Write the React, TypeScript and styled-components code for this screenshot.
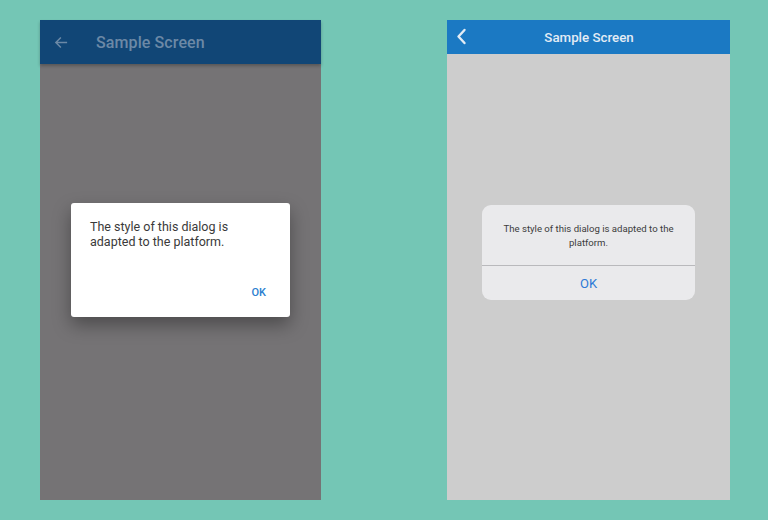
import styled, { createGlobalStyle } from 'styled-components';

const GlobalStyle = createGlobalStyle`
  html, body {
    margin: 0;
    padding: 0;
    background: #74c6b5;
    font-family: Roboto, "Liberation Sans", sans-serif;
  }
`;

const Stage = styled.div`
  width: 768px;
  height: 520px;
  display: flex;
  align-items: flex-start;
  padding-top: 20px;
  box-sizing: border-box;
`;

const Phone = styled.div<{ $left: number; $width: number; $bg: string }>`
  margin-left: ${(p) => p.$left}px;
  width: ${(p) => p.$width}px;
  height: 480px;
  background: ${(p) => p.$bg};
  display: flex;
  flex-direction: column;
`;

const AndroidBar = styled.div`
  height: 44px;
  background: #114676;
  display: flex;
  align-items: center;
  padding-left: 14px;
  gap: 27px;
  color: #6c89a6;
  box-shadow: 0 2px 3px rgba(0, 0, 0, 0.25);
`;

const AndroidTitle = styled.span`
  font-size: 16px;
  font-weight: 500;
  letter-spacing: 0.1px;
`;

const IosBar = styled.div`
  height: 34px;
  background: #1b79c3;
  display: flex;
  align-items: center;
  position: relative;
  color: #e3ecf5;
`;

const IosBack = styled.span`
  position: absolute;
  left: 9px;
  top: 8px;
  display: flex;
`;

const IosTitle = styled.span`
  flex: 1;
  text-align: center;
  font-size: 13.3px;
  font-weight: 500;
  padding-left: 1px;
`;

const Body = styled.div<{ $top: number; $pad: number }>`
  flex: 1;
  padding-top: ${(p) => p.$top}px;
  padding-left: ${(p) => p.$pad}px;
`;

const MaterialDialog = styled.div`
  width: 219px;
  height: 114px;
  background: #fff;
  border-radius: 3px;
  box-shadow: 0 8px 18px rgba(0, 0, 0, 0.35);
  box-sizing: border-box;
  padding: 16px 20px 0 19px;
  display: flex;
  flex-direction: column;
`;

const MaterialText = styled.p`
  margin: 0;
  font-size: 12.5px;
  line-height: 15px;
  color: #3a3a3a;
`;

const MaterialActions = styled.div`
  margin-top: 37px;
  display: flex;
  justify-content: flex-end;
  padding-right: 4px;
`;

const FlatButton = styled.button`
  border: none;
  background: none;
  padding: 0;
  font-family: inherit;
  font-size: 11px;
  font-weight: 500;
  color: #2d80d0;
`;

const CupertinoDialog = styled.div`
  width: 213px;
  background: #eaeaec;
  border-radius: 9px;
  display: flex;
  flex-direction: column;
  overflow: hidden;
`;

const CupertinoText = styled.p`
  margin: 0;
  padding: 17px 14px 15px;
  text-align: center;
  font-size: 9.6px;
  line-height: 14px;
  color: #3c3c3c;
`;

const CupertinoAction = styled.button`
  border: none;
  border-top: 1px solid #b9b9bc;
  background: none;
  height: 35px;
  font-family: inherit;
  font-size: 13px;
  color: #2d7ad6;
`;

export default function App() {
  return (
    <>
      <GlobalStyle />
      <Stage>
        <Phone $left={40} $width={281} $bg="#757375">
          <AndroidBar>
            <svg width="15" height="15" viewBox="0 0 24 24" fill="none" stroke="currentColor" strokeWidth="2.4">
              <path d="M21 12H4M11 4l-8 8 8 8" />
            </svg>
            <AndroidTitle>Sample Screen</AndroidTitle>
          </AndroidBar>
          <Body $top={139} $pad={31}>
            <MaterialDialog>
              <MaterialText>
                The style of this dialog is
                <br />
                adapted to the platform.
              </MaterialText>
              <MaterialActions>
                <FlatButton>OK</FlatButton>
              </MaterialActions>
            </MaterialDialog>
          </Body>
        </Phone>
        <Phone $left={126} $width={283} $bg="#cdcdcd">
          <IosBar>
            <IosBack>
              <svg width="11" height="17" viewBox="0 0 11 17" fill="none" stroke="currentColor" strokeWidth="2.4" strokeLinecap="round" strokeLinejoin="round">
                <path d="M8.5 2L2.5 8.5l6 6.5" />
              </svg>
            </IosBack>
            <IosTitle>Sample Screen</IosTitle>
          </IosBar>
          <Body $top={151} $pad={35}>
            <CupertinoDialog>
              <CupertinoText>
                The style of this dialog is adapted to the platform.
              </CupertinoText>
              <CupertinoAction>OK</CupertinoAction>
            </CupertinoDialog>
          </Body>
        </Phone>
      </Stage>
    </>
  );
}
